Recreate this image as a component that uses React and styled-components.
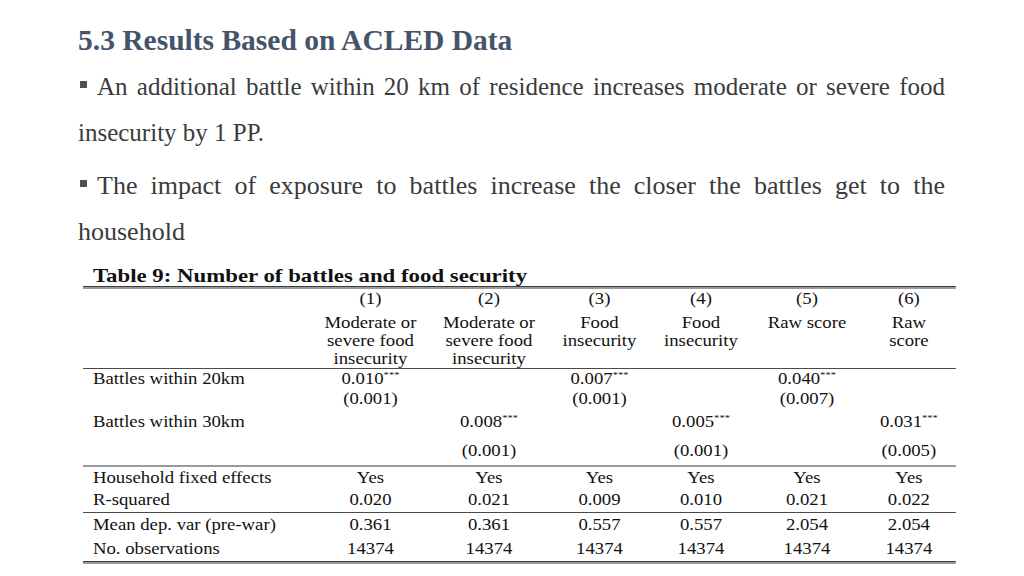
import React from 'react';
import styled, { createGlobalStyle } from 'styled-components';

const Global = createGlobalStyle`
  html, body { margin: 0; padding: 0; background: #fff; }
  body { font-family: "Liberation Serif", "Times New Roman", serif; }
`;

const COLS = '195.7px 100px 102.6px 86.3px 87.2px 94px 80.3px';

const Page = styled.main`
  width: 1024px;
  height: 576px;
  overflow: hidden;
  box-sizing: border-box;
  padding: 22px 0 0 78px;
  display: flex;
  flex-direction: column;
  align-items: flex-start;
`;

const Title = styled.h1`
  margin: 0;
  font-size: 29.5px;
  line-height: 36px;
  font-weight: 700;
  color: #44546a;
`;

const Bullets = styled.div`
  width: 867px;
  margin-top: 6px;
  display: flex;
  flex-direction: column;
  gap: 7px;
`;

const Para = styled.p`
  margin: 0;
  font-size: ${(p) => p.$size || 25}px;
  line-height: 46px;
  color: #3b3b3b;
  text-align: justify;
`;

const Square = styled.span`
  display: inline-block;
  width: 7px;
  height: 7px;
  background: #505050;
  margin: 0 10px 0 2px;
  vertical-align: 7px;
`;

const TableBlock = styled.section`
  margin: 11px 0 0 5px;
  width: 746px;
  transform: scaleX(1.17);
  transform-origin: 0 0;
  color: #111;
`;

const Caption = styled.div`
  padding-left: 8.5px;
  font-size: 19.5px;
  font-weight: 700;
  line-height: 20px;
  height: 20px;
  white-space: nowrap;
`;

const Rule = styled.div`
  height: 3px;
  background: linear-gradient(#3a3a3a 0 1px, #9b9b9b 1px 3px);
`;

const Row = styled.div`
  display: grid;
  grid-template-columns: ${COLS};
  height: ${(p) => p.$h}px;
  padding-top: ${(p) => p.$pt || 0}px;
  align-items: ${(p) => (p.$top ? 'start' : 'center')};
  font-size: 16px;
  border-bottom: ${(p) =>
    p.$rule === 'thin' ? '1px solid #4a4a4a' : p.$rule === 'thick' ? '2px solid #9a9a9a' : 'none'};
`;

const Cell = styled.div`
  text-align: center;
  line-height: 18px;
  white-space: nowrap;
`;

const Label = styled(Cell)`
  text-align: left;
  padding-left: 8.5px;
`;

const Stars = styled.sup`
  font-size: 9px;
  line-height: 0;
  vertical-align: 6px;
`;

const headNums = ['(1)', '(2)', '(3)', '(4)', '(5)', '(6)'];
const headText = [
  ['Moderate or', 'severe food', 'insecurity'],
  ['Moderate or', 'severe food', 'insecurity'],
  ['Food', 'insecurity'],
  ['Food', 'insecurity'],
  ['Raw score'],
  ['Raw', 'score'],
];

const rows = [
  { label: 'Battles within 20km', h: 20, vals: ['0.010*', '', '0.007*', '', '0.040*', ''] },
  { label: '', h: 19, vals: ['(0.001)', '', '(0.001)', '', '(0.007)', ''] },
  { label: 'Battles within 30km', h: 28, vals: ['', '0.008*', '', '0.005*', '', '0.031*'] },
  { label: '', h: 29, rule: 'thick', vals: ['', '(0.001)', '', '(0.001)', '', '(0.005)'] },
  { label: 'Household fixed effects', h: 21, vals: ['Yes', 'Yes', 'Yes', 'Yes', 'Yes', 'Yes'] },
  { label: 'R-squared', h: 24, rule: 'thin', vals: ['0.020', '0.021', '0.009', '0.010', '0.021', '0.022'] },
  { label: 'Mean dep. var (pre-war)', h: 23, vals: ['0.361', '0.361', '0.557', '0.557', '2.054', '2.054'] },
  { label: 'No. observations', h: 25, vals: ['14374', '14374', '14374', '14374', '14374', '14374'] },
];

function Value({ v }) {
  if (v.endsWith('*')) {
    return (
      <>
        {v.slice(0, -1)}
        <Stars>***</Stars>
      </>
    );
  }
  return v;
}

export default function App() {
  return (
    <>
      <Global />
      <Page>
        <Title>5.3 Results Based on ACLED Data</Title>
        <Bullets>
          <Para>
            <Square />
            An additional battle within 20 km of residence increases moderate or severe food insecurity by 1 PP.
          </Para>
          <Para $size={26}>
            <Square />
            The impact of exposure to battles increase the closer the battles get to the household
          </Para>
        </Bullets>
        <TableBlock>
          <Caption>Table 9: Number of battles and food security</Caption>
          <Rule />
          <Row $h={19}>
            <Label />
            {headNums.map((n) => (
              <Cell key={n}>{n}</Cell>
            ))}
          </Row>
          <Row $h={54} $pt={6} $top $rule="thin">
            <Label />
            {headText.map((lines, i) => (
              <Cell key={i}>
                {lines.map((l, j) => (
                  <div key={j}>{l}</div>
                ))}
              </Cell>
            ))}
          </Row>
          {rows.map((r, i) => (
            <Row key={i} $h={r.h} $rule={r.rule}>
              <Label>{r.label}</Label>
              {r.vals.map((v, j) => (
                <Cell key={j}>
                  <Value v={v} />
                </Cell>
              ))}
            </Row>
          ))}
          <Rule />
        </TableBlock>
      </Page>
    </>
  );
}
